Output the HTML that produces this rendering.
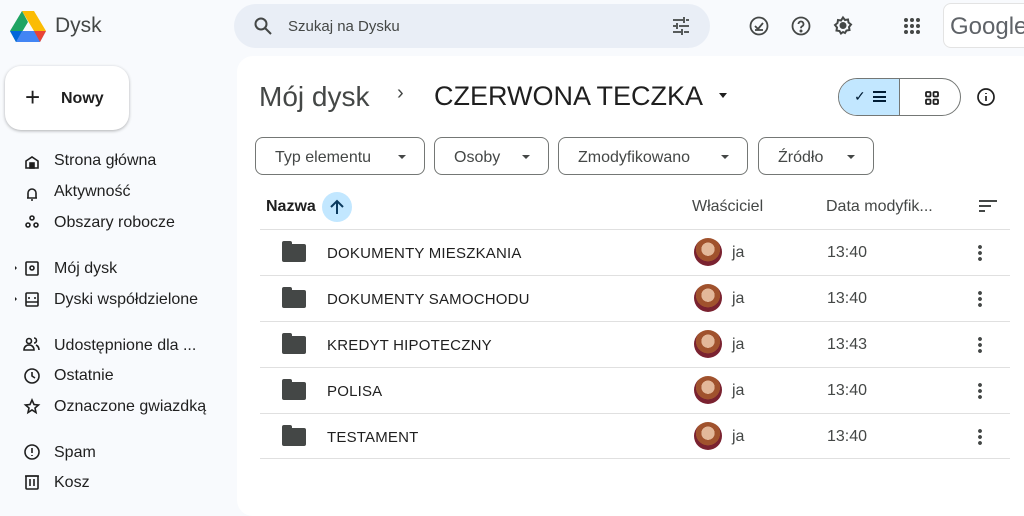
<!DOCTYPE html>
<html><head><meta charset="utf-8"><style>
*{box-sizing:border-box;margin:0;padding:0}
body{width:1024px;height:499px;overflow:hidden;background:#f8fafd;font-family:"Liberation Sans",sans-serif;color:#1f1f1f;position:relative}
.abs{position:absolute}
.nav{position:absolute;left:54px;font-size:16px;color:#1f1f1f}
.main{position:absolute;left:237px;top:56px;width:800px;height:460px;background:#fff;border-radius:16px}
.chip{position:absolute;top:137px;height:38px;border:1px solid #747775;border-radius:8px;font-size:16px;color:#444746;padding:11px 0 0 19px}
.chip:after{content:"";position:absolute;right:18px;top:17px;border:4px solid transparent;border-top:4px solid #444746}
.row{position:absolute;left:260px;width:750px;height:46px;border-top:1px solid #e0e0e0}
.row .n{position:absolute;left:67px;top:15px;font-size:15px;color:#1f1f1f;letter-spacing:.2px}
.row .f{position:absolute;left:22px;top:14px;width:24px;height:18px;background:#444746;border-radius:2px}
.row .f:before{content:"";position:absolute;left:0;top:-3px;width:10px;height:5px;background:#444746;border-radius:2px 2px 0 0}
.row .a{position:absolute;left:434px;top:8px;width:28px;height:28px;border-radius:50%;background:radial-gradient(circle at 50% 40%,#e3b89a 0 30%,#a0522d 31% 55%,#7a2230 56%)}
.row .j{position:absolute;left:472px;top:14px;font-size:16px;color:#444746}
.row .t{position:absolute;left:567px;top:14px;font-size:16px;color:#444746}
.row .k{position:absolute;left:718px;top:14px;width:4px;height:18px;background:radial-gradient(circle,#444746 1.8px,transparent 2px) 0 0/4px 6px}
</style></head><body>
<svg class="abs" style="left:10px;top:11px" width="36" height="31" viewBox="0 0 36 31"><path d="M12 0h12l12 20H24z" fill="#fbbc04"/><path d="M12 0L0 20l6 11 12-20z" fill="#1fa463"/><path d="M6 31h24l6-11H12z" fill="#4285f4"/><path d="M24 20h12l-6 11z" fill="#ea4335"/><path d="M12 20h-12l6 11z" fill="#0066da"/></svg>
<div class="abs" style="left:55px;top:14px;font-size:21px;color:#444746">Dysk</div>
<div class="abs" style="left:234px;top:4px;width:476px;height:44px;background:#e9eef6;border-radius:22px"></div>
<svg class="abs" style="left:253px;top:16px" width="20" height="20" viewBox="0 0 20 20"><circle cx="8" cy="8" r="5.5" fill="none" stroke="#444746" stroke-width="2"/><path d="M12 12l6 6" stroke="#444746" stroke-width="2"/></svg>
<div class="abs" style="left:288px;top:18px;font-size:15px;color:#444746">Szukaj na Dysku</div>
<svg class="abs" style="left:671px;top:16px" width="20" height="20" viewBox="0 0 20 20" stroke="#444746" stroke-width="1.8"><path d="M2 4h10M15 4h3M2 10h3M8 10h10M2 16h8M13 16h5M13 1v6M6 7v6M11 13v6"/></svg>
<svg class="abs" style="left:748px;top:15px" width="22" height="22" viewBox="0 0 22 22" fill="none" stroke="#444746" stroke-width="1.8"><circle cx="11" cy="11" r="8.5"/><path d="M7 11l3 3 5-6M7 15h8"/></svg>
<svg class="abs" style="left:790px;top:15px" width="22" height="22" viewBox="0 0 22 22" fill="none" stroke="#444746" stroke-width="1.8"><circle cx="11" cy="11" r="8.5"/><path d="M8.5 9a2.5 2.5 0 1 1 3.5 2.3c-.8.4-1 1-1 2"/><circle cx="11" cy="16" r=".6" fill="#444746"/></svg>
<svg class="abs" style="left:832px;top:15px" width="22" height="22" viewBox="0 0 22 22" fill="none" stroke="#444746" stroke-width="2"><path d="M11 2.5l2 2.5 3-.5.5 3 2.5 2-2 2.5.5 3-3 .5-1.5 2.5L11 17l-2 1.5-1.5-2.5-3-.5.5-3-2-2.5 2.5-2 .5-3 3 .5z"/><circle cx="11" cy="10.5" r="2.5" fill="#444746"/></svg>
<svg class="abs" style="left:903px;top:17px" width="18" height="18" viewBox="0 0 18 18" fill="#444746"><circle cx="3" cy="3" r="2"/><circle cx="9" cy="3" r="2"/><circle cx="15" cy="3" r="2"/><circle cx="3" cy="9" r="2"/><circle cx="9" cy="9" r="2"/><circle cx="15" cy="9" r="2"/><circle cx="3" cy="15" r="2"/><circle cx="9" cy="15" r="2"/><circle cx="15" cy="15" r="2"/></svg>
<div class="abs" style="left:943px;top:3px;width:95px;height:45px;background:#fff;border:1px solid #e3e3e3;border-radius:8px;font-size:24px;color:#5f6368;padding:9px 0 0 6px">Google</div>

<div class="abs" style="left:5px;top:66px;width:124px;height:64px;background:#fff;border-radius:16px;box-shadow:0 1px 3px rgba(0,0,0,.3)"></div>
<div class="abs" style="left:25px;top:84px;font-size:26px;font-weight:300;line-height:26px">+</div>
<div class="abs" style="left:61px;top:90px;font-size:16px;font-weight:bold;color:#1f1f1f">Nowy</div>

<div class="nav" style="top:152px">Strona główna</div>
<div class="nav" style="top:183px">Aktywność</div>
<div class="nav" style="top:214px">Obszary robocze</div>
<div class="nav" style="top:260px">Mój dysk</div>
<div class="nav" style="top:291px">Dyski współdzielone</div>
<div class="nav" style="top:337px">Udostępnione dla ...</div>
<div class="nav" style="top:367px">Ostatnie</div>
<div class="nav" style="top:398px">Oznaczone gwiazdką</div>
<div class="nav" style="top:444px">Spam</div>
<div class="nav" style="top:474px">Kosz</div>
<svg class="abs" style="left:12px;top:152px" width="32" height="340" viewBox="0 0 32 340" fill="none" stroke="#1f1f1f" stroke-width="1.6">
<path d="M14 16v-7l6-4 6 4v7z"/><rect x="18" y="11" width="4" height="5" fill="#1f1f1f"/>
<path d="M15 46h10M16 46v-5a4 4 0 0 1 8 0v5M19 48h2"/>
<circle cx="20" cy="66" r="2"/><circle cx="16" cy="73" r="2"/><circle cx="24" cy="73" r="2"/>
<rect x="14" y="110" width="12" height="13" rx="1"/><circle cx="20" cy="116" r="2"/><path d="M3 114l2 2-2 2" fill="#1f1f1f" stroke="none"/>
<rect x="14" y="141" width="12" height="13" rx="1"/><path d="M17 145v2M23 145v2M14 150h12"/><path d="M3 145l2 2-2 2" fill="#1f1f1f" stroke="none"/>
<circle cx="17" cy="189" r="2.5"/><path d="M12 198c0-3 2-5 5-5s5 2 5 5zM22 186a2.5 2.5 0 0 1 0 5M24 193c2 1 3 3 3 5"/>
<circle cx="20" cy="224" r="7"/><path d="M20 220v4l3 2"/>
<path d="M20 248l2 4.5 4.5.5-3.5 3 1 4.5-4-2.5-4 2.5 1-4.5-3.5-3 4.5-.5z"/>
<circle cx="20" cy="300" r="7"/><path d="M20 296v5M20 303v1"/>
<rect x="14" y="324" width="12" height="13" rx="1"/><path d="M13 324h14M18 327v7M22 327v7"/>
</svg>

<div class="main"></div>
<div class="abs" style="left:259px;top:81px;font-size:28px;color:#444746">Mój dysk</div>
<div class="abs" style="left:397px;top:82px;font-size:20px;color:#444746">›</div>
<div class="abs" style="left:434px;top:81px;font-size:27px;color:#1f1f1f">CZERWONA TECZKA</div>
<div class="abs" style="left:719px;top:93px;border:4.5px solid transparent;border-top:5px solid #1f1f1f"></div>
<div class="abs" style="left:838px;top:78px;width:123px;height:38px;border:1px solid #747775;border-radius:19px;overflow:hidden">
<div style="position:absolute;left:0;top:0;width:61px;height:38px;background:#c2e7ff;border-right:1px solid #747775"></div>
<div style="position:absolute;left:15px;top:9px;font-size:14px;color:#001d35">✓</div>
<div style="position:absolute;left:34px;top:12px;width:13px;height:11px;border-top:2px solid #001d35;border-bottom:2px solid #001d35"><div style="margin-top:2.5px;height:2px;background:#001d35"></div></div>
<svg style="position:absolute;left:86px;top:12px" width="14" height="14" viewBox="0 0 14 14" fill="none" stroke="#1f1f1f" stroke-width="1.8"><rect x="1" y="1" width="4.5" height="4.5" rx="1"/><rect x="8.5" y="1" width="4.5" height="4.5" rx="1"/><rect x="1" y="8.5" width="4.5" height="4.5" rx="1"/><rect x="8.5" y="8.5" width="4.5" height="4.5" rx="1"/></svg>
</div>
<svg class="abs" style="left:976px;top:87px" width="20" height="20" viewBox="0 0 20 20" fill="none" stroke="#1f1f1f" stroke-width="1.7"><circle cx="10" cy="10" r="8"/><path d="M10 9v5M10 6v1"/></svg>

<div class="chip" style="left:255px;width:170px">Typ elementu</div>
<div class="chip" style="left:434px;width:115px">Osoby</div>
<div class="chip" style="left:558px;width:190px">Zmodyfikowano</div>
<div class="chip" style="left:758px;width:116px">Źródło</div>

<div class="abs" style="left:266px;top:198px;font-size:16px;font-weight:bold;color:#1f1f1f">Nazwa</div>
<div class="abs" style="left:322px;top:192px;width:30px;height:30px;border-radius:50%;background:#c2e7ff"></div>
<svg class="abs" style="left:328px;top:198px" width="18" height="18" viewBox="0 0 18 18" fill="none" stroke="#0b3a5e" stroke-width="2"><path d="M9 16V3M3 9l6-6 6 6"/></svg>
<div class="abs" style="left:692px;top:198px;font-size:16px;color:#444746">Właściciel</div>
<div class="abs" style="left:826px;top:198px;font-size:16px;color:#444746">Data modyfik...</div>
<svg class="abs" style="left:978px;top:199px" width="20" height="14" viewBox="0 0 20 14" stroke="#444746" stroke-width="2"><path d="M1 2h18M1 7h12M1 12h6"/></svg>

<div class="row" style="top:229px"><div class="f"></div><div class="n">DOKUMENTY MIESZKANIA</div><div class="a"></div><div class="j">ja</div><div class="t">13:40</div><div class="k"></div></div>
<div class="row" style="top:275px"><div class="f"></div><div class="n">DOKUMENTY SAMOCHODU</div><div class="a"></div><div class="j">ja</div><div class="t">13:40</div><div class="k"></div></div>
<div class="row" style="top:321px"><div class="f"></div><div class="n">KREDYT HIPOTECZNY</div><div class="a"></div><div class="j">ja</div><div class="t">13:43</div><div class="k"></div></div>
<div class="row" style="top:367px"><div class="f"></div><div class="n">POLISA</div><div class="a"></div><div class="j">ja</div><div class="t">13:40</div><div class="k"></div></div>
<div class="row" style="top:413px;border-bottom:1px solid #e0e0e0"><div class="f"></div><div class="n">TESTAMENT</div><div class="a"></div><div class="j">ja</div><div class="t">13:40</div><div class="k"></div></div>
</body></html>
